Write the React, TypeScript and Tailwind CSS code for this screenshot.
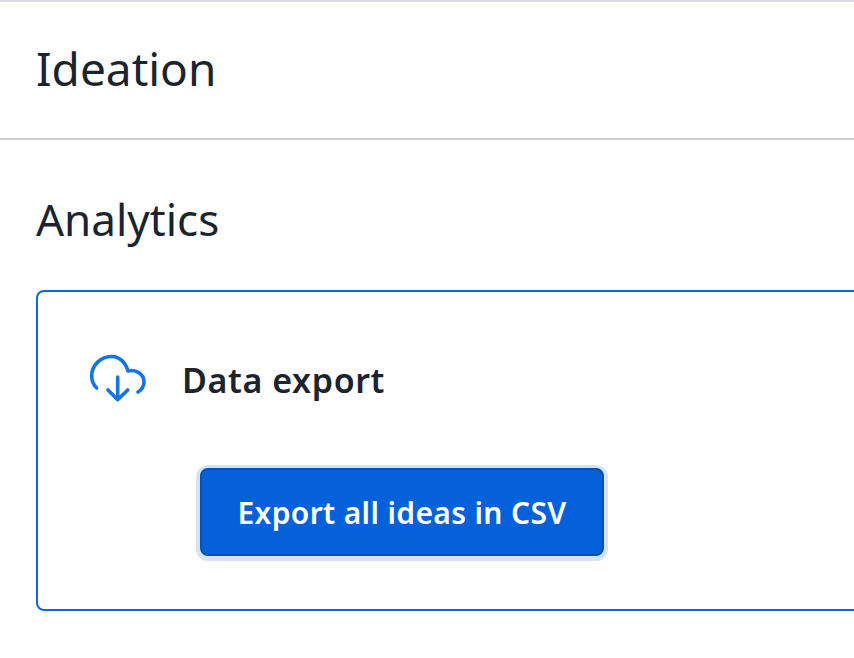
export default function App() {
  return (
    <div className="h-[658px] w-[854px] overflow-hidden bg-white font-['Noto_Sans',sans-serif] text-[#1b232d]">
      <div className="h-[138px] border-t-2 border-[#d8dae0] px-9 pt-[35px]">
        <h1 className="text-[46px] leading-[62px]">Ideation</h1>
      </div>
      <div className="border-t-2 border-[#cccccc] pl-9 pt-[49px]">
        <h2 className="text-[44px] leading-[60px]">Analytics</h2>
        <div className="mt-[41px] h-[321px] w-[900px] rounded-lg border-2 border-[#1068d8] pl-[50px] pt-[62px]">
          <div className="flex items-center gap-[34px]">
            <svg width="60" height="52" viewBox="0 0 60 52" fill="none" stroke="#1274e8" strokeWidth="3.6" strokeLinecap="round" strokeLinejoin="round">
              <path d="M8.7 34C5.5 31 3.7 27 3.7 22C3.7 11 12.7 2.5 23.7 2.5C31 2.5 37.5 8 40 17C48 15 56 20 56 28C56 32 54 35.5 50 38" />
              <path d="M29.7 23V45.7M20 36L29.7 45.7L39.7 36" />
            </svg>
            <span className="text-[34px] font-semibold leading-[46px] tracking-[0.6px]">Data export</span>
          </div>
          <button className="ml-[112px] mt-[62px] flex h-[88px] w-[404px] items-center justify-center rounded-lg border-2 border-[#0a4fa8] bg-[#0561da] text-[30px] font-semibold tracking-[0.35px] text-white shadow-[0_1px_0_4px_#d3e4f9]">
            Export all ideas in CSV
          </button>
        </div>
      </div>
    </div>
  );
}
